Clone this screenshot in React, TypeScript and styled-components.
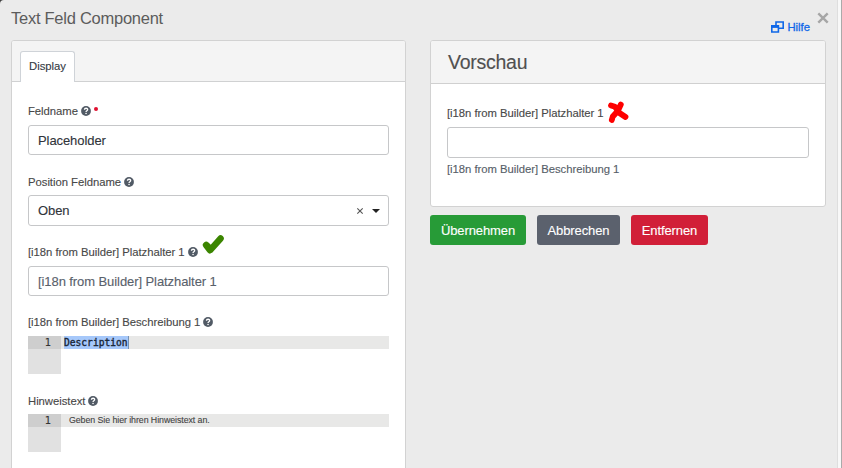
import React from "react";
import styled, { createGlobalStyle } from "styled-components";

const GlobalStyle = createGlobalStyle`
  *, *::before, *::after { box-sizing: border-box; }
  html, body { margin: 0; overflow: hidden; background: #f8f8f8; }
  body {
    font-family: "Liberation Sans", Arial, sans-serif;
    color: #444;
    -webkit-text-stroke: 0.12px;
  }
`;

const Page = styled.div`
  height: 468px;
  background: #3e3e3e;
  display: flex;
`;

const Dialog = styled.main`
  width: 838px;
  flex: none;
  height: 468px;
  background: #ebebeb;
  border-right: 1px solid #dedede;
  border-top-left-radius: 4px;
`;

const ScrollTrack = styled.div`
  flex: 1;
  background: #f8f8f8;
  border-right: 1px solid #aaa;
`;

const Header = styled.header`
  height: 40px;
  padding: 0 8px 0 11px;
  display: flex;
  align-items: flex-start;
`;

const Title = styled.h1`
  margin: 8px auto 0 0;
  font-size: 16.5px;
  letter-spacing: -0.26px;
  line-height: 20px;
  font-weight: 400;
  color: #5c5c5c;
  -webkit-text-stroke: 0;
`;

const HelpLink = styled.a`
  display: flex;
  align-items: center;
  gap: 3px;
  margin-top: 20px;
  color: #1068e8;
  font-size: 11.3px;
  line-height: 14px;
  -webkit-text-stroke: 0.3px;
`;

const CloseButton = styled.button`
  width: 12px;
  height: 12px;
  margin: 12px 0 0 7px;
  padding: 0;
  border: 0;
  background: none;
  svg { display: block; }
`;

const Columns = styled.div`
  display: flex;
  align-items: flex-start;
  gap: 24px;
  padding-left: 11px;
`;

const SideColumn = styled.div`
  width: 397px;
`;

const Card = styled.section<{ $width: number; $height: number }>`
  width: ${(p) => p.$width}px;
  height: ${(p) => p.$height}px;
  background: #fff;
  border: 1px solid #d2d2d2;
  border-radius: 3px;
  overflow: hidden;
`;

const TabBar = styled.nav`
  height: 41px;
  padding: 10px 0 0 8px;
  background: #f4f4f4;
  border-bottom: 1px solid #d0d1d2;
`;

const Tab = styled.div`
  width: 55px;
  height: 31px;
  border: 1px solid #cfd3d8;
  border-bottom: 0;
  border-radius: 3px 3px 0 0;
  background: #fff;
  color: #343a43;
  font-size: 11.3px;
  line-height: 29px;
  text-align: center;
`;

const PreviewHeader = styled.h2`
  height: 43px;
  margin: 0;
  padding-left: 17px;
  background: #f4f4f4;
  border-bottom: 1px solid #d0d0d0;
  font-size: 19.5px;
  letter-spacing: -0.25px;
  line-height: 43px;
  font-weight: 400;
  color: #505050;
`;

const Form = styled.div`
  padding: 22px 16px 0;
`;

const Field = styled.div<{ $height: number }>`
  height: ${(p) => p.$height}px;
`;

const Label = styled.div<{ $space?: number }>`
  height: 14px;
  margin-bottom: ${(p) => p.$space ?? 7}px;
  display: flex;
  align-items: center;
  gap: 3px;
  font-size: 11.3px;
  letter-spacing: -0.03px;
  line-height: 14px;
  white-space: nowrap;
  color: #484848;
`;

const Required = styled.span`
  width: 4px;
  height: 4px;
  margin: -4px 0 0 0;
  border-radius: 50%;
  background: #e01030;
`;

const Control = styled.div<{ $height?: number; $muted?: boolean }>`
  height: ${(p) => p.$height ?? 30}px;
  display: flex;
  align-items: center;
  padding: 0 8px 0 9px;
  border: 1px solid #c6c7c9;
  border-radius: 3px;
  background: #fff;
  font-size: 13px;
  letter-spacing: -0.08px;
  color: ${(p) => (p.$muted ? "#59616b" : "#30343a")};
`;

const SelectIcons = styled.span`
  display: flex;
  align-items: center;
  gap: 8px;
  margin-left: auto;
`;

const Hint = styled.div`
  margin-top: 4px;
  font-size: 11.3px;
  letter-spacing: -0.03px;
  line-height: 14px;
  color: #565e68;
`;

const Editor = styled.div`
  height: 38px;
  display: grid;
  grid-template-columns: 33px 1fr;
  background: #fff;
  line-height: 13px;
`;

const Gutter = styled.div`
  background: #e1e1e1;
  font: 10.2px/13px "DejaVu Sans Mono", monospace;
  color: #333;
`;

const LineNumber = styled.div`
  height: 13px;
  padding-right: 10px;
  background: #cecece;
  text-align: right;
`;

const CodeLine = styled.div`
  height: 13px;
  padding-left: 3px;
  background: #e8e8e7;
`;

const Selection = styled.span`
  display: inline-block;
  height: 13px;
  width: 65px;
  background: #a6c8fa;
  border-right: 1px solid #7892b3;
  font: 9.6px/13px "DejaVu Sans Mono", monospace;
  -webkit-text-stroke: 0.35px;
  color: #172536;
  vertical-align: top;
`;

const EditorPlaceholder = styled.span`
  display: block;
  padding-left: 5px;
  font-size: 8.8px;
  letter-spacing: -0.06px;
  line-height: 12px;
  color: #444;
`;

const Mark = styled.svg<{ $top: number; $gap: number }>`
  flex: none;
  margin: ${(p) => p.$top}px 0 0 ${(p) => p.$gap}px;
`;

const Actions = styled.div`
  display: flex;
  gap: 11px;
  margin-top: 8px;
`;

const Button = styled.button<{ $color: string; $width: number }>`
  width: ${(p) => p.$width}px;
  height: 30px;
  padding: 0;
  border: 0;
  border-radius: 3px;
  background: ${(p) => p.$color};
  color: #fff;
  font: 13px "Liberation Sans", Arial, sans-serif;
  letter-spacing: -0.1px;
`;

const HelpIcon = () => (
  <svg width="10" height="10" viewBox="0 0 20 20" aria-hidden="true">
    <circle cx="10" cy="10" r="9.8" fill="#515a65" />
    <path d="M6.8 7.6C7 3.5 13.5 3.6 13.3 7.4c-.1 2.3-3.2 2.1-3.2 4.6" fill="none" stroke="#fff" strokeWidth="2.6" />
    <circle cx="10.1" cy="15" r="1.6" fill="#fff" />
  </svg>
);

const WindowsIcon = () => (
  <svg width="13" height="12" viewBox="0 0 13 12" fill="none" stroke="#1068e8" strokeWidth="1.6" aria-hidden="true">
    <path d="M5 5V1h7.2v6.2H8" />
    <path d="M.8 4.8h6.6v6.2H.8z" />
    <path d="M.8 5.8h6.4" strokeWidth="2.2" />
  </svg>
);

export default function App() {
  return (
    <Page>
      <GlobalStyle />
      <Dialog>
        <Header>
          <Title>Text Feld Component</Title>
          <HelpLink><WindowsIcon />Hilfe</HelpLink>
          <CloseButton aria-label="Schließen">
            <svg width="12" height="12" viewBox="0 0 12 12">
              <path d="M1.3 1.3l9.4 9.4m0-9.4l-9.4 9.4" stroke="#a6a6a6" strokeWidth="2.4" />
            </svg>
          </CloseButton>
        </Header>
        <Columns>
          <Card $width={395} $height={450}>
            <TabBar><Tab>Display</Tab></TabBar>
            <Form>
              <Field $height={71}>
                <Label>Feldname<HelpIcon /><Required /></Label>
                <Control>Placeholder</Control>
              </Field>
              <Field $height={70}>
                <Label $space={6}>Position Feldname<HelpIcon /></Label>
                <Control $height={31}>
                  Oben
                  <SelectIcons>
                    <svg width="8" height="8" viewBox="0 0 8 8">
                      <path d="M1.3 1.3l5.4 5.4m0-5.4L1.3 6.7" stroke="#555" strokeWidth="1.1" />
                    </svg>
                    <svg width="8" height="4" viewBox="0 0 8 4"><path d="M0 0h8L4 4z" fill="#222" /></svg>
                  </SelectIcons>
                </Control>
              </Field>
              <Field $height={70}>
                <Label>
                  [i18n from Builder] Platzhalter 1<HelpIcon />
                  <Mark $top={-14} $gap={1} width="22" height="20" viewBox="0 0 22 20">
                    <path d="M4 10l4 5.3L18.6 3.5M5 10.5l3 3" fill="none" stroke="#3b8500" strokeWidth="6.4" strokeLinecap="round" strokeLinejoin="round" />
                  </Mark>
                </Label>
                <Control $muted>[i18n from Builder] Platzhalter 1</Control>
              </Field>
              <Field $height={79}>
                <Label>[i18n from Builder] Beschreibung 1<HelpIcon /></Label>
                <Editor>
                  <Gutter><LineNumber>1</LineNumber></Gutter>
                  <CodeLine><Selection>Description</Selection></CodeLine>
                </Editor>
              </Field>
              <Field $height={60}>
                <Label $space={6}>Hinweistext<HelpIcon /></Label>
                <Editor>
                  <Gutter><LineNumber>1</LineNumber></Gutter>
                  <CodeLine><EditorPlaceholder>Geben Sie hier ihren Hinweistext an.</EditorPlaceholder></CodeLine>
                </Editor>
              </Field>
            </Form>
          </Card>
          <SideColumn>
            <Card $width={396} $height={167}>
              <PreviewHeader>Vorschau</PreviewHeader>
              <Form>
                <Label>
                  [i18n from Builder] Platzhalter 1
                  <Mark $top={-3} $gap={1} width="21" height="22" viewBox="0 0 21 22">
                    <path d="M3 4.5l4 1.2 4.5 6.3 6 4M12.8 3.6l-3 6.4-5 5.5-1 3.5" fill="none" stroke="#fe0000" strokeWidth="5.8" strokeLinecap="round" strokeLinejoin="round" />
                  </Mark>
                </Label>
                <Control $height={31} />
                <Hint>[i18n from Builder] Beschreibung 1</Hint>
              </Form>
            </Card>
            <Actions>
              <Button $color="#279b37" $width={96}>Übernehmen</Button>
              <Button $color="#5b616d" $width={83}>Abbrechen</Button>
              <Button $color="#d11f38" $width={77}>Entfernen</Button>
            </Actions>
          </SideColumn>
        </Columns>
      </Dialog>
      <ScrollTrack />
    </Page>
  );
}
